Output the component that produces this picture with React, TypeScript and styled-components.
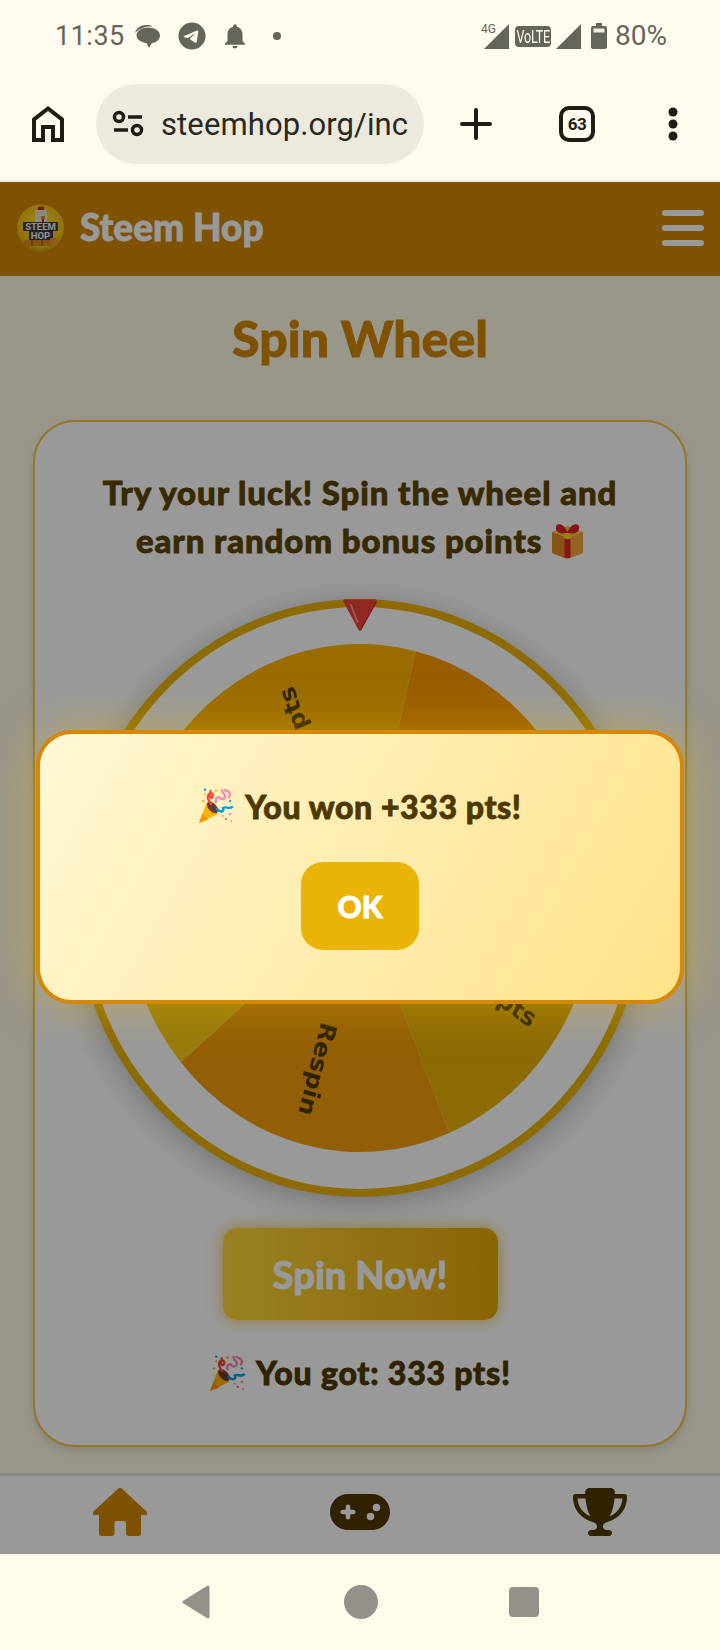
import React from "react";
import styled, { createGlobalStyle } from "styled-components";
import { FaGamepad, FaTrophy, FaTelegram } from "react-icons/fa6";
import { MdNotifications } from "react-icons/md";

const Global = createGlobalStyle`
  html, body { margin: 0; padding: 0; background: #fffbeb; }
  * { box-sizing: border-box; }
`;

const rounded = `
  font-family: "Lato", "Noto Sans", sans-serif;
  font-weight: 900;
  -webkit-text-stroke: 0.8px currentColor;
  paint-order: stroke fill;
`;

const Screen = styled.div`
  width: 720px;
  height: 1650px;
  display: flex;
  flex-direction: column;
  background: #fffbeb;
  overflow: hidden;
`;

const StatusBar = styled.div`
  height: 72px;
  padding: 0 53px 0 55px;
  display: flex;
  align-items: center;
  justify-content: space-between;
  background: #fffbee;
  color: #66655c;
  font-family: "Roboto", sans-serif;
`;
const StatusGroup = styled.div`
  display: flex;
  align-items: center;
`;
const Clock = styled.span`
  font-size: 27px;
  line-height: 32px;
  letter-spacing: 0.5px;
`;
const Percent = styled.span`
  font-size: 28px;
  line-height: 32px;
  margin-left: 8px;
`;
const Slot = styled.span<{ $left: number }>`
  display: flex;
  margin-left: ${(p) => p.$left}px;
`;
const SignalBox = styled.span`
  position: relative;
  display: flex;
`;
const FourG = styled.span`
  position: absolute;
  left: -3px;
  top: -1px;
  font-size: 12px;
  line-height: 12px;
`;
const Volte = styled.span`
  width: 36px;
  height: 21px;
  margin-left: 6px;
  border-radius: 4px;
  background: #66655c;
  color: #fffbee;
  display: flex;
  align-items: center;
  justify-content: center;
  overflow: hidden;
`;
const VolteText = styled.span`
  flex: none;
  font-size: 19px;
  line-height: 21px;
  letter-spacing: -0.4px;
  transform: scaleX(0.66);
`;

const Toolbar = styled.div`
  height: 108px;
  padding: 12px 0 16px 32px;
  display: flex;
  align-items: center;
  background: #fffbee;
  color: #1e1c14;
`;
const UrlPill = styled.div`
  width: 328px;
  height: 80px;
  margin-left: 32px;
  padding: 0 16px 0 16px;
  border-radius: 40px;
  background: #ece9de;
  display: flex;
  align-items: center;
  gap: 17px;
  overflow: hidden;
`;
const UrlText = styled.span`
  flex: 1;
  overflow: hidden;
  white-space: nowrap;
  font-family: "Roboto", sans-serif;
  font-size: 31px;
  letter-spacing: 0.1px;
  color: #2a2820;
`;
const TabCount = styled.div`
  width: 36px;
  height: 36px;
  margin-left: 67px;
  border: 4px solid #1e1c14;
  border-radius: 10px;
  display: flex;
  align-items: center;
  justify-content: center;
  font: 700 17px "Roboto", sans-serif;
  letter-spacing: -0.5px;
`;
const Divider = styled.div`
  height: 2px;
  background: #ece9de;
`;

const WebView = styled.div`
  position: relative;
  flex: 1;
  display: flex;
  flex-direction: column;
  background: #fffbe6;
`;
const Header = styled.header`
  height: 94px;
  padding: 0 16px 2px 17px;
  display: flex;
  align-items: center;
  background: #d48806;
  color: #fff;
`;
const Brand = styled.div`
  margin: 0 0 4px 16px;
  font-size: 37px;
  ${rounded}
`;
const Burger = styled.div`
  margin-left: auto;
  width: 42px;
  display: flex;
  flex-direction: column;
  gap: 9px;
`;
const BurgerBar = styled.span`
  height: 6px;
  border-radius: 3px;
  background: #fff;
`;

const Main = styled.main`
  flex: 1;
  padding: 27px 33px 26px;
  display: flex;
  flex-direction: column;
  align-items: center;
`;
const Title = styled.h1`
  margin: 0 0 46px;
  color: #d48806;
  font-size: 50px;
  line-height: 71px;
  ${rounded}
`;
const Card = styled.section`
  flex: 1;
  width: 100%;
  padding: 46px 0 0;
  border: 2px solid #f5c542;
  border-radius: 42px;
  background: #fff;
  box-shadow: 0 4px 10px rgba(0, 0, 0, 0.12);
  display: flex;
  flex-direction: column;
  align-items: center;
`;
const Lead = styled.p`
  margin: 0 0 35px;
  width: 540px;
  text-align: center;
  color: #5c4500;
  font-size: 33px;
  letter-spacing: 0.9px;
  line-height: 48px;
  ${rounded}
`;
const EmojiSlot = styled.span`
  display: inline-flex;
  vertical-align: -6px;
`;
const WheelRing = styled.div`
  position: relative;
  width: 570px;
  height: 598px;
  flex: none;
  border: 8px solid #eab308;
  border-radius: 50%;
  background: #fff;
  box-shadow: 0 6px 30px rgba(0, 0, 0, 0.25);
  display: flex;
  align-items: center;
  justify-content: center;
`;
const Disc = styled.svg`
  filter: blur(0.7px);
`;
const WheelLabel = styled.text`
  font-family: "DejaVu Sans", sans-serif;
  font-size: 25px;
  font-weight: 700;
  fill: #4d3900;
`;
const PointerSlot = styled.span`
  position: absolute;
  left: 50%;
  top: -8px;
  transform: translateX(-50%);
  display: flex;
`;
const SpinButton = styled.button`
  width: 275px;
  height: 92px;
  margin-top: 31px;
  border: 0;
  border-radius: 14px;
  background: linear-gradient(90deg, #ffd83a, #e6a80a);
  box-shadow: 0 0 16px rgba(234, 179, 8, 0.7);
  color: #fff;
  font-size: 38px;
  ${rounded}
`;
const Result = styled.p`
  margin: 29px 0 0;
  display: flex;
  align-items: center;
  gap: 10px;
  color: #4d3900;
  font-size: 32px;
  letter-spacing: 0.8px;
  line-height: 48px;
  ${rounded}
`;

const BottomNav = styled.nav`
  height: 81px;
  border-top: 3px solid #e7e4d8;
  background: #fff;
  display: flex;
`;
const NavItem = styled.div<{ $active?: boolean }>`
  flex: 1;
  display: flex;
  align-items: center;
  justify-content: center;
  padding-bottom: 6px;
  color: ${(p) => (p.$active ? "#d48806" : "#4d3900")};
`;

const Overlay = styled.div`
  position: absolute;
  inset: 0;
  background: rgba(0, 0, 0, 0.4);
  display: flex;
  align-items: center;
  justify-content: center;
`;
const Modal = styled.div`
  width: 648px;
  height: 274px;
  margin-bottom: 2px;
  padding: 48px 0 50px;
  border: 4px solid #d48806;
  border-radius: 36px;
  background: linear-gradient(120deg, #fff8d4, #ffe28a);
  box-shadow: 0 0 50px rgba(255, 200, 0, 0.36);
  display: flex;
  flex-direction: column;
  align-items: center;
  gap: 32px;
`;
const ModalText = styled.p`
  margin: 0;
  display: flex;
  align-items: center;
  gap: 11px;
  height: 48px;
  color: #4d3900;
  font-size: 32px;
  letter-spacing: 0.6px;
  ${rounded}
`;
const OkButton = styled.button`
  width: 118px;
  height: 88px;
  flex: none;
  border: 0;
  border-radius: 22px;
  background: #eab308;
  color: #fff;
  font-size: 30px;
  ${rounded}
`;

const SystemNav = styled.div`
  height: 96px;
  background: #fffbeb;
  display: flex;
  align-items: center;
  justify-content: center;
`;

const Signal = () => (
  <svg width="25" height="25" viewBox="0 0 25 25"><path d="M25 0V25H0Z" fill="currentColor" /></svg>
);

const Bubble = () => (
  <svg width="25" height="23" viewBox="0 0 25 23">
    <path d="M0 8C1 3 6 0 11 0c2.500 0 5 .4 7 1.500C12 1 5 2.500 0 8Z" fill="currentColor" />
    <path d="M13 2.500c6.500 0 12 3 12 8 0 4-3.500 7-8 7.500L14 22.800 11.500 18C5.500 17.500 1.500 14 1.500 10.500 1.500 6 7 2.500 13 2.500Z" fill="currentColor" />
  </svg>
);

const Battery = () => (
  <svg width="16" height="26" viewBox="0 0 16 26">
    <path d="M5 0h6v3h3a2 2 0 0 1 2 2v19a2 2 0 0 1-2 2H2a2 2 0 0 1-2-2V5a2 2 0 0 1 2-2h3Z" fill="currentColor" />
    <rect x="2.500" y="5.500" width="11" height="4" fill="#fffbee" opacity="0.9" />
  </svg>
);

const ChromeHome = () => (
  <svg width="32" height="36" viewBox="0 0 32 36" fill="none" stroke="currentColor" strokeWidth="4">
    <path d="M2 34V13.500L16 2.500 30 13.500V34H21V21H11V34Z" />
  </svg>
);

const Tune = () => (
  <svg width="32" height="28" viewBox="0 0 32 28" fill="none" stroke="currentColor" strokeWidth="3.500">
    <circle cx="7" cy="7" r="4.500" />
    <path d="M16 7H30M2 20H16" />
    <circle cx="25" cy="20" r="4.500" />
  </svg>
);

const Plus = () => (
  <svg width="32" height="32" viewBox="0 0 32 32" stroke="currentColor" strokeWidth="4" strokeLinecap="round">
    <path d="M16 2V30M2 16H30" />
  </svg>
);

const Kebab = () => (
  <svg width="10" height="34" viewBox="0 0 10 34" fill="currentColor">
    <circle cx="5" cy="5" r="4.500" />
    <circle cx="5" cy="17" r="4.500" />
    <circle cx="5" cy="29" r="4.500" />
  </svg>
);

const Logo = () => (
  <svg width="47" height="48" viewBox="0 0 47 48">
    <defs>
      <radialGradient id="lg" cx="50%" cy="42%" r="60%">
        <stop offset="0%" stopColor="#ffe23a" />
        <stop offset="80%" stopColor="#f2c20c" />
        <stop offset="100%" stopColor="#b8921a" />
      </radialGradient>
    </defs>
    <circle cx="23.500" cy="24" r="23.500" fill="url(#lg)" />
    <rect x="18" y="6" width="12" height="13" fill="#e8e4c8" />
    <rect x="21" y="2.500" width="6" height="3.500" fill="#c8281c" />
    <rect x="24" y="12" width="4" height="3" fill="#e88a10" />
    <rect x="25" y="15" width="2" height="3" fill="#c8281c" />
    <rect x="6" y="18" width="35" height="9" rx="1" fill="#3d3d42" />
    <rect x="12" y="27" width="24" height="9" fill="#3d3d42" />
    <text x="23.500" y="26" textAnchor="middle" fontSize="9.500" fontWeight="700" fontFamily="Roboto, sans-serif" fill="#f4f4ee">STEEM</text>
    <text x="23.500" y="35" textAnchor="middle" fontSize="9.500" fontWeight="700" fontFamily="Roboto, sans-serif" fill="#f4f4ee">HOP</text>
    <rect x="7" y="36" width="28" height="6" fill="#e08a1e" />
    <rect x="33" y="34" width="8" height="6" fill="#e89a28" />
    <path d="M15 36V42M25 36V42" stroke="#8a4f10" strokeWidth="1" />
  </svg>
);

const Gift = () => (
  <svg width="33" height="36" viewBox="0 0 33 36">
    <path d="M1 9 16.500 14V36L2 30.500a2 2 0 0 1-1-1.500Z" fill="#e08a20" />
    <path d="M32 9 16.500 14V36L31 30.500a2 2 0 0 0 1-1.500Z" fill="#f2a838" />
    <path d="M1 9 16.500 3 32 9 16.500 15Z" fill="#ffc24a" />
    <path d="M13.500 13V35H19.500V13Z" fill="#e3202a" />
    <path d="M16.500 10C10 12 4 9 5 3.500 6 -.5 13 .5 16.500 9 20 .5 27 -.5 28 3.500 29 9 23 12 16.500 10Z" fill="#e3202a" />
    <rect x="13" y="10" width="7" height="6" rx="1.500" fill="#ffd21f" />
  </svg>
);

const Popper = ({ size }: { size: number }) => (
  <svg width={size} height={size} viewBox="0 0 36 36">
    <path d="M1 35 9 14 20 26Z" fill="#ffb300" />
    <path d="M1 35 4.500 26 10 31.500Z" fill="#f59300" />
    <ellipse cx="14.500" cy="19.500" rx="4" ry="7" transform="rotate(-42 14.500 19.500)" fill="#6d3b2a" />
    <path d="M13 16C10 12 8.500 8 11 6 13.500 4 16 6.500 14.500 9 13 11 10.500 9.500 12.500 3" fill="none" stroke="#f44336" strokeWidth="2.200" strokeLinecap="round" />
    <path d="M18 14C17 10 20 8 22 10 24 12 28 11 27 7.500 26 4.500 23 4 24 1.800 M27 2C30 3 34 5 31 9" fill="none" stroke="#f48fb1" strokeWidth="2.400" strokeLinecap="round" />
    <path d="M19 21C22 25 27 24 25 20 28 18 31 21.500 34 19" fill="none" stroke="#039be5" strokeWidth="2.400" strokeLinecap="round" />
    <g fill="#ffb300">
      <circle cx="5" cy="13" r="1.200" />
      <circle cx="18" cy="2.500" r="1.200" />
      <circle cx="7" cy="6" r="1" />
    </g>
    <g fill="#03a9f4">
      <circle cx="7" cy="1.800" r="1.200" />
      <circle cx="32" cy="13" r="1.200" />
    </g>
    <g fill="#f48fb1">
      <circle cx="32" cy="26" r="1.300" />
      <circle cx="33" cy="33" r="1.100" />
      <circle cx="25" cy="28" r="1" />
    </g>
    <g fill="#f44336">
      <circle cx="28" cy="31" r="1" />
    </g>
  </svg>
);

const Pointer = () => (
  <svg width="36" height="32" viewBox="0 0 36 32">
    <path d="M3 2H33L18 30Z" fill="#f04438" stroke="#f04438" strokeWidth="3.500" strokeLinejoin="round" />
    <path d="M18 31 33.500 3 35 3 19 31Z" fill="#c8281c" />
    <path d="M9 6 15.500 23" stroke="#ff9d94" strokeWidth="1.800" strokeLinecap="round" />
  </svg>
);

const House = () => (
  <svg width="54" height="48" viewBox="0 0 54 48" fill="currentColor">
    <path d="M25 .8a3 3 0 0 1 4 0L53.300 23.200A1.800 1.800 0 0 1 52 27H48V45a3 3 0 0 1-3 3H36a3 3 0 0 1-3-3V35a2 2 0 0 0-2-2H23.500a2 2 0 0 0-2 2V45a3 3 0 0 1-3 3H9a3 3 0 0 1-3-3V27H2A1.800 1.800 0 0 1 .7 23.200Z" />
  </svg>
);

const BackGlyph = () => (
  <svg width="30" height="34" viewBox="0 0 30 34">
    <path d="M27 2 3 17 27 32Z" fill="#93918a" stroke="#93918a" strokeWidth="3" strokeLinejoin="round" />
  </svg>
);
const HomeGlyph = styled.span`
  width: 34px;
  height: 34px;
  margin-left: 133px;
  border-radius: 50%;
  background: #93918a;
`;
const SquareGlyph = styled.span`
  width: 30px;
  height: 30px;
  margin-left: 131px;
  border-radius: 4px;
  background: #93918a;
`;

const START = 13.7;
const segments = [
  { fill: "#ff9900", label: "+500 pts" },
  { fill: "#eab308", label: "+333 pts" },
  { fill: "#f59e0b", label: "Respin" },
  { fill: "#facc15", label: "+50 pts" },
  { fill: "#ffb300", label: "+100 pts" },
];
const R = 254;
const pt = (deg: number, r: number) => {
  const a = (deg * Math.PI) / 180;
  return `${(R + r * Math.sin(a)).toFixed(2)} ${(R - r * Math.cos(a)).toFixed(2)}`;
};

const Wheel = () => (
  <Disc width="470" height="508" viewBox="0 0 508 508" preserveAspectRatio="none">
    {segments.map((s, i) => {
      const from = START + i * 72;
      return <path key={s.label} d={`M${R} ${R} L${pt(from, R)} A${R} ${R} 0 0 1 ${pt(from + 72, R)} Z`} fill={s.fill} />;
    })}
    {segments.map((s, i) => {
      const mid = START + i * 72 + 36 + 1.5;
      return (
        <WheelLabel key={s.label} x={R + 225} y={R + 8} textAnchor="end" transform={`rotate(${mid - 90} ${R} ${R})`}>
          {s.label}
        </WheelLabel>
      );
    })}
  </Disc>
);

export default function App() {
  return (
    <Screen>
      <Global />
      <StatusBar>
        <StatusGroup>
          <Clock>11:35</Clock>
          <Slot $left={10}><Bubble /></Slot>
          <Slot $left={18}><FaTelegram size={28} /></Slot>
          <Slot $left={14}><MdNotifications size={30} /></Slot>
          <Slot $left={23}>
            <svg width="8" height="8" viewBox="0 0 8 8"><circle cx="4" cy="4" r="4" fill="currentColor" /></svg>
          </Slot>
        </StatusGroup>
        <StatusGroup>
          <SignalBox><FourG>4G</FourG><Signal /></SignalBox>
          <Volte><VolteText>VoLTE</VolteText></Volte>
          <Slot $left={5}><Signal /></Slot>
          <Slot $left={10}><Battery /></Slot>
          <Percent>80%</Percent>
        </StatusGroup>
      </StatusBar>
      <Toolbar>
        <ChromeHome />
        <UrlPill>
          <Tune />
          <UrlText>steemhop.org/includes</UrlText>
        </UrlPill>
        <Slot $left={36}><Plus /></Slot>
        <TabCount>63</TabCount>
        <Slot $left={73}><Kebab /></Slot>
      </Toolbar>
      <Divider />
      <WebView>
        <Header>
          <Logo />
          <Brand>Steem Hop</Brand>
          <Burger>
            <BurgerBar />
            <BurgerBar />
            <BurgerBar />
          </Burger>
        </Header>
        <Main>
          <Title>Spin Wheel</Title>
          <Card>
            <Lead>
              Try your luck! Spin the wheel and earn random bonus points{" "}
              <EmojiSlot><Gift /></EmojiSlot>
            </Lead>
            <WheelRing>
              <Wheel />
              <PointerSlot><Pointer /></PointerSlot>
            </WheelRing>
            <SpinButton>Spin Now!</SpinButton>
            <Result><Popper size={37} /> You got: 333 pts!</Result>
          </Card>
        </Main>
        <BottomNav>
          <NavItem $active><House /></NavItem>
          <NavItem><FaGamepad size={60} /></NavItem>
          <NavItem><FaTrophy size={54} /></NavItem>
        </BottomNav>
        <Overlay>
          <Modal>
            <ModalText><Popper size={36} /> You won +333 pts!</ModalText>
            <OkButton>OK</OkButton>
          </Modal>
        </Overlay>
      </WebView>
      <SystemNav>
        <BackGlyph />
        <HomeGlyph />
        <SquareGlyph />
      </SystemNav>
    </Screen>
  );
}
